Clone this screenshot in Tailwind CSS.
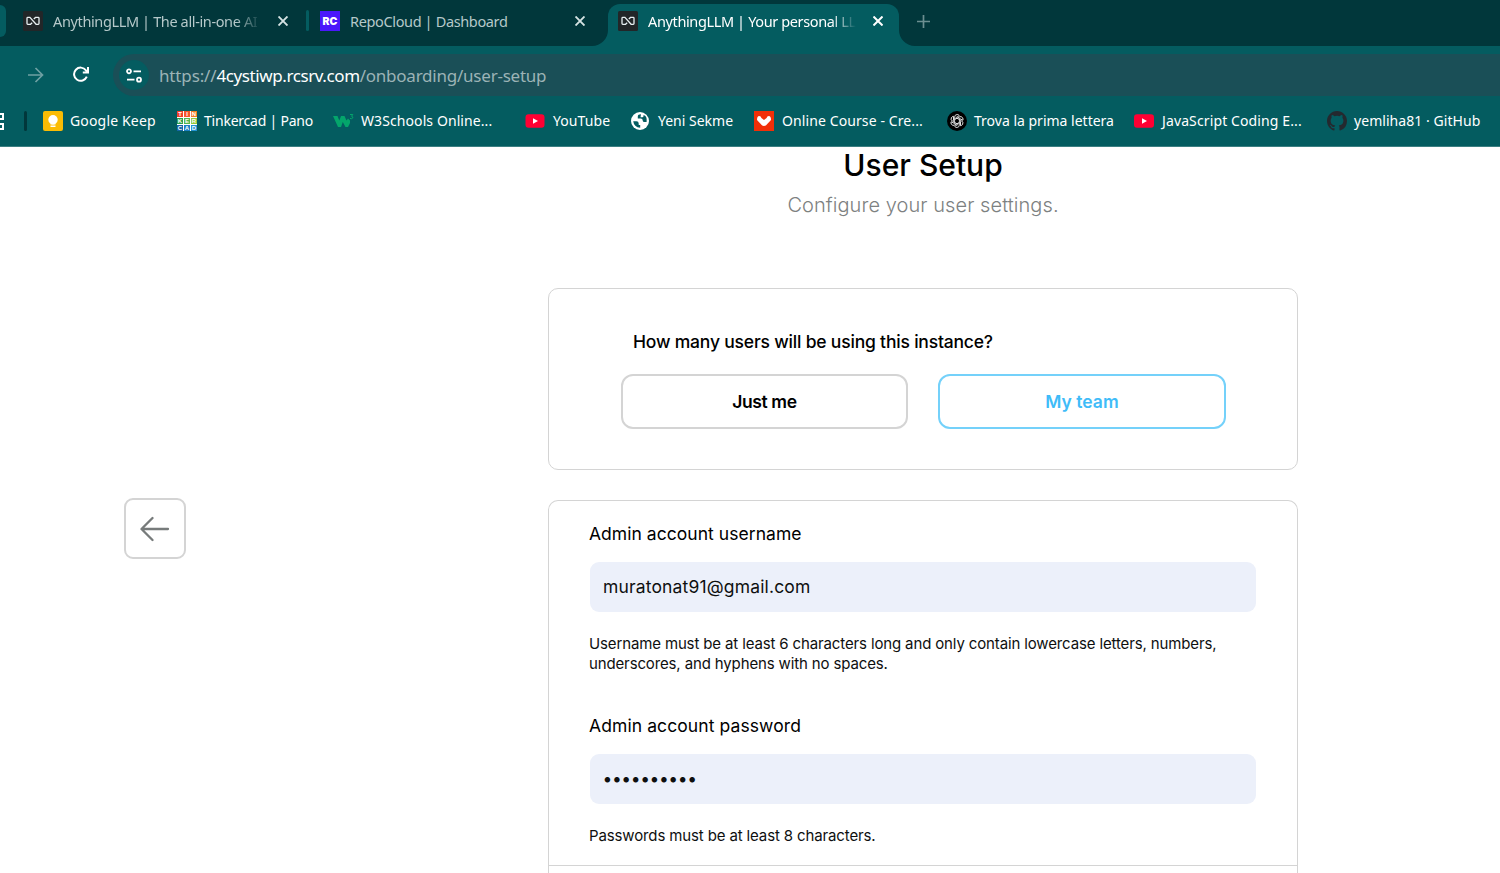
<!DOCTYPE html>
<html lang="en">
<head>
<meta charset="utf-8">
<title>AnythingLLM | Your personal LLM</title>
<script src="https://cdn.jsdelivr.net/npm/@tailwindcss/browser@4"></script>
</head>
<body class="w-[1500px] h-[873px] overflow-hidden bg-white flex flex-col text-black">
<header class="shrink-0 h-[147px] flex flex-col bg-[#045c60] border-b border-[#3c7f82] text-white font-['Noto_Sans',sans-serif] whitespace-nowrap">
  <!-- Tab strip -->
  <div class="h-[46px] shrink-0 bg-[#01373b] flex">
    <div class="mt-[5px] w-[6px] h-[32px] bg-[#045c60] rounded-r-[8px]"></div>
    <div class="flex items-center w-[283px] pl-[17px] h-[42px] text-[#b5c8c9]">
      <svg class="w-5 h-5 shrink-0" viewBox="0 0 20 20"><rect width="20" height="20" rx="1.5" fill="#222628"/><path d="M9.2 11.8 7.5 13.300H4.800q-.8 0-.8-.8V7.200q0-.8.8-.8H6.900l6.200 6.900h2.100q.8 0 .8-.8V7.200q0-.8-.8-.8h-2.700L10.800 7.900" fill="none" stroke="#e8f0f2" stroke-width="1.300"/></svg>
      <span class="ml-[10px] pt-[2px] w-[208px] overflow-hidden text-[14.5px] tracking-[-0.37px] [mask-image:linear-gradient(to_right,black_88%,transparent)]">AnythingLLM | The all-in-one AI</span>
      <svg class="w-[10px] h-[10px] ml-[17px] shrink-0" viewBox="0 0 10 10"><path d="M.5.5l9 9M9.500.5l-9 9" stroke="#d5e3e3" stroke-width="1.900"/></svg>
    </div>
    <div class="mt-[10px] ml-[17px] w-[3px] h-[21px] rounded bg-[#045c60]"></div>
    <div class="flex items-center w-[290px] pl-[11px] h-[42px] text-[#b5c8c9]">
      <span class="w-5 h-5 shrink-0 bg-[#4b18fb] text-white font-['Inter',sans-serif] font-black text-[10.500px] leading-[21px] text-center">RC</span>
      <span class="ml-[10px] pt-[2px] w-[225px] text-[14.5px] tracking-[-0.36px]">RepoCloud | Dashboard</span>
      <svg class="w-[10px] h-[10px] shrink-0" viewBox="0 0 10 10"><path d="M.5.5l9 9M9.500.5l-9 9" stroke="#d5e3e3" stroke-width="1.900"/></svg>
    </div>
    <div class="relative ml-[9px] mt-[4px] w-[291px] h-[42px] bg-[#045c60] rounded-t-[12px] flex pl-[10px]">
      <svg class="absolute bottom-0 -left-[16px] w-4 h-4" viewBox="0 0 16 16"><path d="M16 0V16H0A16 16 0 0 0 16 0" fill="#045c60"/></svg>
      <svg class="absolute bottom-0 -right-[16px] w-4 h-4" viewBox="0 0 16 16"><path d="M0 0V16H16A16 16 0 0 1 0 0" fill="#045c60"/></svg>
      <div class="flex items-center h-[34px]">
        <svg class="w-5 h-5 shrink-0" viewBox="0 0 20 20"><rect width="20" height="20" rx="1.5" fill="#222628"/><path d="M9.2 11.8 7.5 13.300H4.800q-.8 0-.8-.8V7.200q0-.8.8-.8H6.900l6.200 6.900h2.100q.8 0 .8-.8V7.200q0-.8-.8-.8h-2.700L10.800 7.900" fill="none" stroke="#e8f0f2" stroke-width="1.300"/></svg>
        <span class="ml-[10px] pt-[2px] w-[208px] overflow-hidden text-[14.5px] tracking-[-0.37px] [mask-image:linear-gradient(to_right,black_88%,transparent)]">AnythingLLM | Your personal LLM</span>
        <svg class="w-[10px] h-[10px] ml-[17px] shrink-0" viewBox="0 0 10 10"><path d="M.5.5l9 9M9.500.5l-9 9" stroke="#fff" stroke-width="2"/></svg>
      </div>
    </div>
    <svg class="ml-[18px] mt-[15px] w-[13px] h-[13px]" viewBox="0 0 13 13"><path d="M6.500 0v13M0 6.500h13" stroke="#6c8f91" stroke-width="1.700"/></svg>
  </div>
  <!-- Toolbar -->
  <div class="h-[58px] shrink-0 flex pt-[8px] text-[17px]">
    <svg class="ml-[28px] mt-[13px] w-[16px] h-[16px]" viewBox="0 0 16 16"><path d="M0 8h14M7.500 1l7 7-7 7" fill="none" stroke="#6fa0a3" stroke-width="1.700"/></svg>
    <svg class="ml-[29px] mt-[12px] w-[16px] h-[16px]" viewBox="0 0 16 16"><path d="M13.800 10.700A6.600 6.600 0 1 1 13 4.300L14.800 6.300M9.800 6.500H15V1" fill="none" stroke="#fff" stroke-width="2"/></svg>
    <div class="ml-[24px] grow h-[42px] rounded-l-[21px] bg-[#1a4f57] flex items-center pl-[6px]">
      <span class="w-[30px] h-[30px] shrink-0 rounded-full bg-[#045c60] flex items-center justify-center"><svg class="w-4 h-[15px]" viewBox="0 0 16 15"><g fill="none" stroke="#fff" stroke-width="1.800"><circle cx="3" cy="3.300" r="2"/><path d="M7.500 3.300H15M1 11.700h7.500"/><circle cx="13" cy="11.700" r="2"/></g></svg></span>
      <span class="ml-[10px] pt-[2px] text-[#9cb3b6]"><span class="tracking-[-0.15px]">https://</span><span class="text-white tracking-[-0.4px]">4cystiwp.rcsrv.com</span><span class="tracking-[-0.23px]">/onboarding/user-setup</span></span>
    </div>
  </div>
  <!-- Bookmarks -->
  <div class="h-[34px] shrink-0 flex items-center text-[14px] leading-[20px]">
    <svg class="w-[4px] h-[17px] shrink-0" viewBox="0 0 4 17"><path d="M0 1h3v5H0M0 11h3v5H0" fill="none" stroke="#fff" stroke-width="2"/></svg>
    <span class="ml-[20px] mr-[16px] w-[3px] h-5 rounded bg-[#01373b]"></span>
    <div class="w-[134px] shrink-0 flex items-center gap-[7px]"><svg class="w-5 h-5" viewBox="0 0 20 20"><rect width="20" height="20" rx="2" fill="#fbbc04"/><circle cx="10" cy="8.800" r="4.700" fill="#fff"/><path d="M7.500 11h5v2.600h-5zM7.500 14.500h5v1.500h-5z" fill="#fff"/></svg><span class="tracking-[0.16px]">Google Keep</span></div>
    <div class="w-[156px] shrink-0 flex items-center gap-[7px]"><div class="grid grid-cols-3 gap-[1px] w-5 h-5 bg-white text-white font-['Liberation_Sans',sans-serif] font-bold text-[6px] leading-[6px] text-center"><i class="not-italic bg-[#f0402b]">T</i><i class="not-italic bg-[#f7562c]">I</i><i class="not-italic bg-[#f57f22]">N</i><i class="not-italic bg-[#2a9d4e]">K</i><i class="not-italic bg-[#54b54c]">E</i><i class="not-italic bg-[#95c93d]">R</i><i class="not-italic bg-[#1565a7]">C</i><i class="not-italic bg-[#1b7fc4]">A</i><i class="not-italic bg-[#2392d0]">D</i></div><span class="tracking-[-0.22px]">Tinkercad | Pano</span></div>
    <div class="w-[192px] shrink-0 flex items-center gap-[7px]"><svg class="w-[21px] h-5" viewBox="0 0 21 20"><path d="M0 5h4.500l1.800 4.500L8 5h3.500l2 4.500L15 7.500l2 2v2.500l-2 4h-2.500L9.800 11 8 16H5z" fill="#04a56b"/><path d="M17 3.500H19.800L18.500 5.300q1.800.2 1.300 1.600-.8 1.300-2.800.5" fill="none" stroke="#04a56b" stroke-width="1"/></svg><span class="tracking-[0.09px]">W3Schools Online...</span></div>
    <div class="w-[106px] shrink-0 flex items-center gap-[7px]"><svg class="w-5 h-5" viewBox="0 0 20 20"><rect x=".5" y="3.200" width="19" height="13.600" rx="3" fill="#ff0033"/><path d="M8 7.200v5.600l5-2.800z" fill="#fff"/></svg><span class="pl-px tracking-[0.08px]">YouTube</span></div>
    <div class="w-[123px] shrink-0 flex items-center gap-[9px]"><svg class="w-[18px] h-[18px]" viewBox="0 0 18 18"><circle cx="9" cy="9" r="9" fill="#fff"/><path d="M2.200 9.200h3.300q2.200 0 2.200 2.200v1.700h1.500v2.700Q3 15 2.200 9.200M10 2.200q-3.200 0-3.200 2.400v1.900h2.900q2 0 2 1.900 0 1.700 1.800 1.700h2.100Q16.500 4 12.500 3v1q0 1.200-1.300 1.200H9.500" fill="#045c60"/></svg><span>Yeni Sekme</span></div>
    <div class="w-[193px] shrink-0 flex items-center gap-[8px]"><svg class="w-5 h-5" viewBox="0 0 20 20"><path fill="#f22f08" d="M0 0h20v20H0z"/><path d="M3 9Q3 5 5.200 5 7 5 7.400 7L10 9l2.600-2Q13 5 14.800 5 17 5 17 9l-3.500 3.800Q12 15 10 15t-3.500-2.200z" fill="#fff"/></svg><span class="tracking-[0.1px]">Online Course - Cre...</span></div>
    <div class="w-[187px] shrink-0 flex items-center gap-[7px]"><svg class="w-5 h-5" viewBox="0 0 20 20"><circle cx="10" cy="10" r="10" fill="#000"/><g fill="none" stroke="#fff" stroke-width=".8"><path id="petal" d="M7.600 11.300V6.200Q7.600 3.700 10 3.500q1.500 0 2.300 1.100L8.800 6.700q-.4.200-.4.700"/><use href="#petal" transform="rotate(60 10 10)"/><use href="#petal" transform="rotate(120 10 10)"/><use href="#petal" transform="rotate(180 10 10)"/><use href="#petal" transform="rotate(240 10 10)"/><use href="#petal" transform="rotate(300 10 10)"/></g></svg><span>Trova la prima lettera</span></div>
    <div class="w-[193px] shrink-0 flex items-center gap-[7px]"><svg class="w-5 h-5" viewBox="0 0 20 20"><rect y="3.200" width="20" height="13.600" rx="3" fill="#ff0033"/><path d="M8 7.200v5.600l5-2.800z" fill="#fff"/></svg><span class="pl-px tracking-[0.12px]">JavaScript Coding E...</span></div>
    <div class="shrink-0 flex items-center gap-[7px]"><svg class="w-5 h-5" viewBox="0 0 16 16"><path fill="#24292f" d="M8 0C3.580 0 0 3.580 0 8c0 3.540 2.290 6.530 5.470 7.590.4.070.55-.17.55-.38 0-.19-.01-.82-.01-1.490-2.010.37-2.530-.49-2.690-.94-.09-.23-.48-.94-.82-1.130-.28-.15-.68-.52-.01-.53.63-.01 1.080.58 1.230.82.72 1.210 1.870.87 2.330.66.07-.52.28-.87.51-1.070-1.780-.2-3.640-.89-3.640-3.950 0-.87.31-1.590.82-2.150-.08-.2-.36-1.020.08-2.120 0 0 .67-.21 2.200.82a7.500 7.500 0 0 1 4 0c1.530-1.040 2.200-.82 2.200-.82.44 1.100.16 1.920.08 2.120.51.56.82 1.270.82 2.150 0 3.070-1.870 3.750-3.650 3.950.29.25.54.73.54 1.480 0 1.070-.01 1.930-.01 2.200 0 .21.15.46.55.38A8 8 0 0 0 16 8c0-4.420-3.580-8-8-8"/></svg><span class="tracking-[0.05px]">yemliha81 · GitHub</span></div>
  </div>
</header>

<main class="grow min-h-0 flex font-['Inter',sans-serif] whitespace-nowrap">
  <button class="shrink-0 ml-[124px] mt-[351px] w-[62px] h-[61px] rounded-[9px] border-2 border-[#d4d4d4] flex items-center justify-center"><svg class="w-[30px] h-[26px]" viewBox="0 0 30 26"><path d="M28 13H2M12.500 2 1.500 13 12.500 24" fill="none" stroke="#777b7b" stroke-width="2.300" stroke-linecap="round" stroke-linejoin="round"/></svg></button>
  <section class="ml-[362px] w-[750px] shrink-0 flex flex-col">
    <h1 class="h-[38px] leading-[36px] text-center text-[30px] font-medium">User Setup</h1>
    <p class="h-[42px] leading-[41px] text-center text-[20px] text-[#7d8181] font-light tracking-[0.07px]">Configure your user settings.</p>
    <div class="mt-[61px] h-[182px] shrink-0 rounded-[10px] border border-[#d4d4d4] pl-[72px] pt-[40px]">
      <div class="pl-[12px] h-[45px] leading-[26px] text-[17.5px] font-medium tracking-[-0.19px]">How many users will be using this instance?</div>
      <div class="flex gap-[30px] text-[17.5px] font-semibold">
        <button class="w-[287px] h-[55px] pt-px rounded-[12px] border-2 border-[#d4d4d4] tracking-[-0.4px]">Just me</button>
        <button class="w-[288px] h-[55px] pt-px rounded-[12px] border-2 border-[#74d1fa] text-[#3fbcf8]">My team</button>
      </div>
    </div>
    <div class="mt-[30px] grow rounded-t-[10px] border border-b-0 border-[#d4d4d4]">
      <div class="h-[365px] px-[40px] border-b border-[#d4d4d4] text-[#0e0f0f]">
        <div class="pt-[20px] h-[61px] leading-[26px] text-[17.5px] text-black tracking-[0.04px]">Admin account username</div>
        <div class="ml-px w-[666px] h-[50px] rounded-[9px] bg-[#ecf0fa] pl-[13px] leading-[50px] text-[17.5px] tracking-[0.16px]">muratonat91@gmail.com</div>
        <p class="mt-[22px] h-[60px] leading-5 text-[15px] tracking-[-0.135px]">Username must be at least 6 characters long and only contain lowercase letters, numbers,<br>underscores, and hyphens with no spaces.</p>
        <div class="pt-[19px] h-[60px] leading-[26px] text-[17.5px] text-black tracking-[0.09px]">Admin account password</div>
        <div class="ml-px w-[666px] h-[50px] rounded-[9px] bg-[#ecf0fa] pl-[13px] pt-px flex items-center text-[17.5px] font-semibold tracking-[0.6px]">••••••••••</div>
        <p class="mt-[22px] leading-5 text-[15px] tracking-[-0.13px]">Passwords must be at least 8 characters.</p>
      </div>
    </div>
  </section>
</main>
</body>
</html>
